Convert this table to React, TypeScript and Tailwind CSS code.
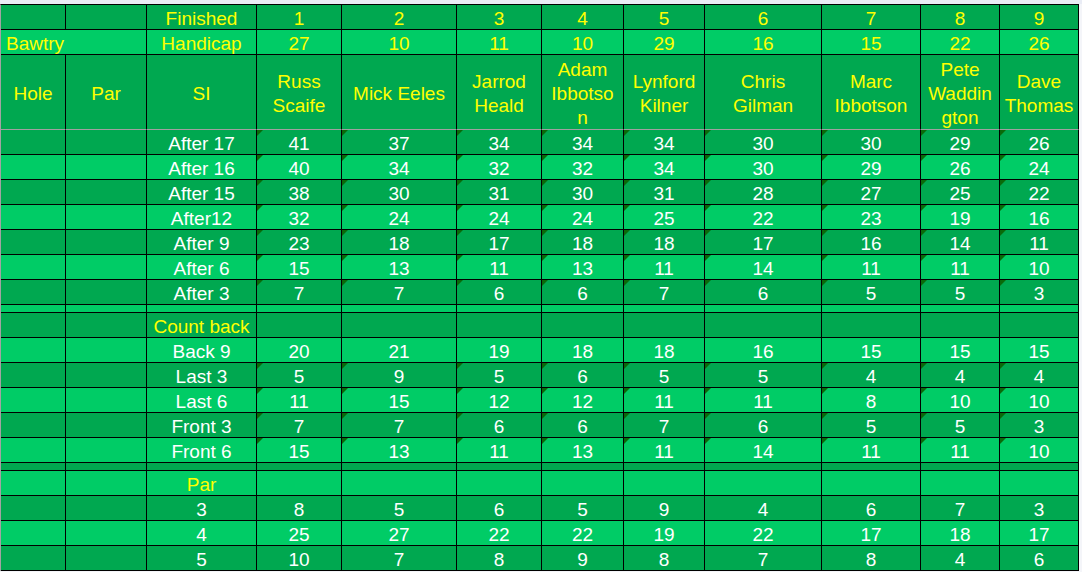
const dark = "bg-[#00a850]";
const light = "bg-[#00cc66]";

const colWidths = "grid-cols-[65px_81px_110px_85px_115px_85px_82px_81px_117px_99px_79px_79px]";

const players = [
    ["Russ", "Scaife"],
    ["Mick Eeles"],
    ["Jarrod", "Heald"],
    ["Adam", "Ibbotso", "n"],
    ["Lynford", "Kilner"],
    ["Chris", "Gilman"],
    ["Marc", "Ibbotson"],
    ["Pete", "Waddin", "gton"],
    ["Dave", "Thomas"],
];

const handicaps = [27, 10, 11, 10, 29, 16, 15, 22, 26];

type Row =
    | { kind: "data"; label: string; values: number[]; bg: string; flag: boolean }
    | { kind: "title"; label: string; bg: string }
    | { kind: "gap"; bg: string };

const rows: Row[] = [
    { kind: "data", label: "After 17", values: [41, 37, 34, 34, 34, 30, 30, 29, 26], bg: dark, flag: true },
    { kind: "data", label: "After 16", values: [40, 34, 32, 32, 34, 30, 29, 26, 24], bg: light, flag: true },
    { kind: "data", label: "After 15", values: [38, 30, 31, 30, 31, 28, 27, 25, 22], bg: dark, flag: true },
    { kind: "data", label: "After12", values: [32, 24, 24, 24, 25, 22, 23, 19, 16], bg: light, flag: true },
    { kind: "data", label: "After 9", values: [23, 18, 17, 18, 18, 17, 16, 14, 11], bg: dark, flag: true },
    { kind: "data", label: "After 6", values: [15, 13, 11, 13, 11, 14, 11, 11, 10], bg: light, flag: true },
    { kind: "data", label: "After 3", values: [7, 7, 6, 6, 7, 6, 5, 5, 3], bg: dark, flag: true },
    { kind: "gap", bg: light },
    { kind: "title", label: "Count back", bg: dark },
    { kind: "data", label: "Back 9", values: [20, 21, 19, 18, 18, 16, 15, 15, 15], bg: light, flag: false },
    { kind: "data", label: "Last 3", values: [5, 9, 5, 6, 5, 5, 4, 4, 4], bg: dark, flag: true },
    { kind: "data", label: "Last 6", values: [11, 15, 12, 12, 11, 11, 8, 10, 10], bg: light, flag: true },
    { kind: "data", label: "Front 3", values: [7, 7, 6, 6, 7, 6, 5, 5, 3], bg: dark, flag: true },
    { kind: "data", label: "Front 6", values: [15, 13, 11, 13, 11, 14, 11, 11, 10], bg: light, flag: true },
    { kind: "gap", bg: dark },
    { kind: "title", label: "Par", bg: light },
    { kind: "data", label: "3", values: [8, 5, 6, 5, 9, 4, 6, 7, 3], bg: dark, flag: false },
    { kind: "data", label: "4", values: [25, 27, 22, 22, 19, 22, 17, 18, 17], bg: light, flag: false },
    { kind: "data", label: "5", values: [10, 7, 8, 9, 8, 7, 8, 4, 6], bg: dark, flag: false },
];

// plain 25px spreadsheet cell with black grid lines right and bottom
const Cell = ({ bg, text, yellow, flag, tall }: { bg: string; text?: string | number; yellow?: boolean; flag?: boolean; tall?: boolean }) => (
    <div
        className={`relative flex items-center justify-center border-r border-b border-black ${tall ? "h-[8px]" : "h-[25px] pt-[3px]"} ${bg} ${yellow ? "text-[#ffff00]" : "text-white"}`}
    >
        {flag && (
            <span className="absolute top-0 left-0 w-0 h-0 border-t-[6px] border-r-[6px] border-t-[#0a6a0a] border-r-transparent" />
        )}
        {text}
    </div>
);

const App = () => {
    return (
        <div className="w-[1082px] h-[572px] bg-[#f4f5f9] font-['Liberation_Sans',Arial,sans-serif] text-[19px] leading-[24px]">
            <div className="h-[4px] bg-[#e9ecf5]" />
            <div className={`grid ${colWidths} w-[1079px] border-t border-l border-t-black border-l-[#a3a3a3]`}>
                {/* Finished */}
                <Cell bg={dark} />
                <Cell bg={dark} />
                <Cell bg={dark} text="Finished" yellow />
                {players.map((_, i) => (
                    <Cell key={i} bg={dark} text={i + 1} yellow />
                ))}

                {/* Handicap */}
                <div className={`col-span-2 h-[25px] pt-[3px] flex items-center pl-[5px] border-r border-b border-black text-[#ffff00] ${light}`}>Bawtry</div>
                <Cell bg={light} text="Handicap" yellow />
                {handicaps.map((h, i) => (
                    <Cell key={i} bg={light} text={h} yellow />
                ))}

                {/* Names */}
                {["Hole", "Par", "SI"].map((t) => (
                    <div key={t} className={`h-[75px] pt-[3px] flex items-center justify-center border-r border-b border-r-black border-b-[#a0a0a0] text-[#ffff00] ${dark}`}>
                        {t}
                    </div>
                ))}
                {players.map((lines, i) => (
                    <div key={i} className={`h-[75px] pt-[3px] flex flex-col items-center justify-center text-center border-r border-b border-r-black border-b-[#a0a0a0] text-[#ffff00] ${dark}`}>
                        {lines.map((l) => (
                            <span key={l}>{l}</span>
                        ))}
                    </div>
                ))}

                {rows.map((row, r) => {
                    if (row.kind === "gap") {
                        return Array.from({ length: 12 }, (_, i) => <Cell key={`${r}-${i}`} bg={row.bg} tall />);
                    }
                    if (row.kind === "title") {
                        return Array.from({ length: 12 }, (_, i) => (
                            <Cell key={`${r}-${i}`} bg={row.bg} text={i === 2 ? row.label : undefined} yellow />
                        ));
                    }
                    return [
                        <Cell key={`${r}-a`} bg={row.bg} />,
                        <Cell key={`${r}-b`} bg={row.bg} />,
                        <Cell key={`${r}-c`} bg={row.bg} text={row.label} />,
                        ...row.values.map((v, i) => <Cell key={`${r}-${i}`} bg={row.bg} text={v} flag={row.flag} />),
                    ];
                })}
            </div>
        </div>
    );
};

export default App;
